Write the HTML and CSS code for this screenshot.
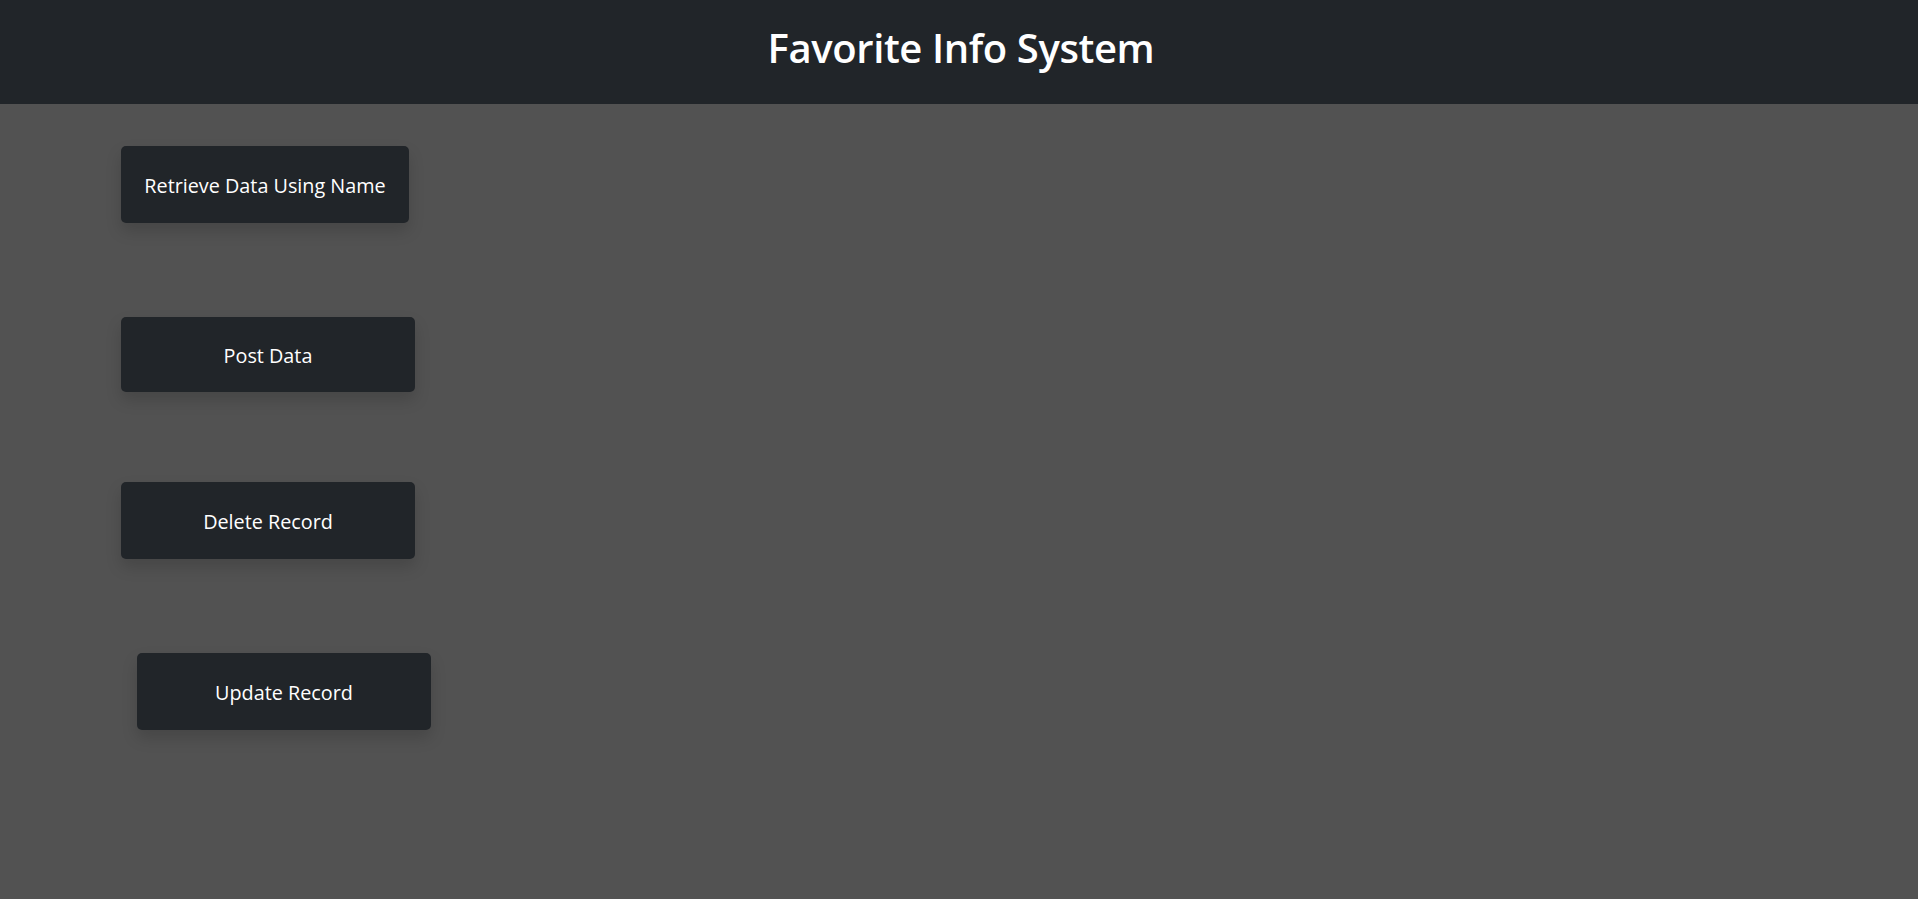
FILE: index.html
```html
<!DOCTYPE html>
<html lang="en">
<head>
<meta charset="utf-8">
<title>Favorite Info System</title>
<link rel="stylesheet" href="styles.css">
</head>
<body>
<header class="topbar">
  <h1 class="title">Favorite Info System</h1>
</header>
<main class="actions">
  <button class="btn btn-retrieve">Retrieve Data Using Name</button>
  <button class="btn btn-post">Post Data</button>
  <button class="btn btn-delete">Delete Record</button>
  <button class="btn btn-update">Update Record</button>
</main>
</body>
</html>
```

FILE: styles.css
```css
html, body {
  margin: 0;
  padding: 0;
}
body {
  background: #525252;
  min-height: 899px;
  font-family: "Open Sans", "Noto Sans", sans-serif;
  color: #fff;
}
.topbar {
  background: #212529;
  height: 104px;
  display: flex;
  align-items: center;
  justify-content: center;
}
.title {
  margin: 0 0 8px 4px;
  font-size: 40px;
  font-weight: 600;
  line-height: 1.2;
  color: #fff;
  letter-spacing: -0.4px;
}
.actions {
  display: flex;
  flex-direction: column;
  align-items: flex-start;
  padding: 42px 0 0 121px;
}
.btn {
  background: #212529;
  color: #fff;
  border: none;
  border-radius: 5px;
  font-family: "Open Sans", "Noto Sans", sans-serif;
  font-size: 19.8px;
  height: 77px;
  width: 294px;
  padding: 2px 0 0 0;
  box-shadow: 0 8px 16px rgba(0, 0, 0, 0.15);
  cursor: pointer;
}
.btn-retrieve {
  width: 288px;
  margin-bottom: 94px;
}
.btn-post {
  height: 75px;
  margin-bottom: 90px;
}
.btn-delete {
  margin-bottom: 94px;
}
.btn-update {
  margin-left: 16px;
}
```
